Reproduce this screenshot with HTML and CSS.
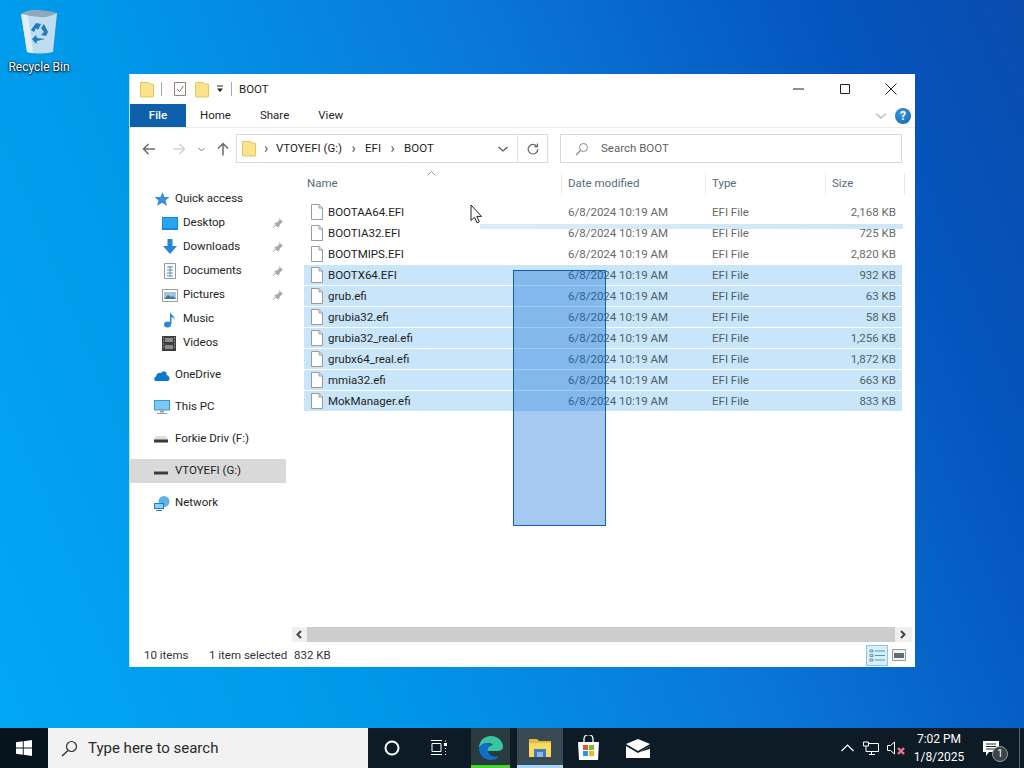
FILE: index.html
```html
<!DOCTYPE html>
<html lang="en">
<head>
    <meta charset="UTF-8">
    <title>BOOT</title>
    <link rel="stylesheet" href="styles.css">
</head>
<body>
    <svg class="defs" width="0" height="0">
        <symbol id="folder" viewBox="0 0 14 17">
            <path d="M1 1.500h7.500l1 1.500h3.500a.5.5 0 0 1 .5.5v12a.5.5 0 0 1-.5.5H1a.5.5 0 0 1-.5-.5V2a.5.5 0 0 1 .5-.5z" fill="#fbe38d" stroke="#e6c65c"/>
        </symbol>
        <symbol id="file" viewBox="0 0 14 16">
            <path d="M1.500.5h7.500l3.500 3.500v11.500h-11z" fill="#fff" stroke="#9a9a9a"/>
            <path d="M9 .5v3.500h3.500" fill="none" stroke="#9a9a9a"/>
        </symbol>
        <symbol id="pin" viewBox="0 0 12 12">
            <path d="M7 1l4 4-1.200.6-2.300 2.400-.3 2-1.200.4L2.500 6.900l.5-1.200 2-.3 2.400-2.300z" fill="#a9a9a9"/>
            <path d="M4 8L1 11" stroke="#a9a9a9"/>
        </symbol>
        <symbol id="drive" viewBox="0 0 14 8">
            <path d="M2 1h10l2 3v3.500H0V4z" fill="#dedede"/>
            <path d="M0 4.500h14v3H0z" fill="#3c3c3c"/>
        </symbol>
    </svg>

    <div class="desktop">
        <div class="desk-icon">
            <svg width="42" height="46" viewBox="0 0 42 46">
                <path d="M3 5l36-1-4 39q-14 3-26 0z" fill="#cfe3ee" opacity=".92"/>
                <path d="M3 5q8-5 18-4t18 3q-8 5-18 4T3 5z" fill="#8fa9b8"/>
                <path d="M3 5l6 38q3 1 6 1L10 6z" fill="#eef6fa" opacity=".7"/>
                <path d="M13 21l5-7 5 1-3 6-2-2-2 4zM26 15l4 8-2 4-5-1 3-3-3-4zM27 30l-8 2-1 3-4-5 4-4 1 3z" fill="#1d7cc4"/>
            </svg>
            <span>Recycle Bin</span>
        </div>

        <div class="window">
            <div class="titlebar">
                <svg class="ic" width="14" height="17"><use href="#folder"/></svg>
                <i class="qsep"></i>
                <svg class="ic check" width="14" height="16" viewBox="0 0 14 16">
                    <path d="M1.500 1.500h11v13h-11z" fill="#fff" stroke="#9c8276"/>
                    <path d="M4 8l2.500 2.500L10.500 5" fill="none" stroke="#777"/>
                </svg>
                <svg class="ic folder2" width="14" height="17"><use href="#folder"/></svg>
                <svg class="ic qdrop" width="8" height="8" viewBox="0 0 8 8">
                    <path d="M1 1h6" stroke="#222"/><path d="M1 3.500h6L4 7z" fill="#222"/>
                </svg>
                <i class="qsep"></i>
                <span class="title">BOOT</span>
                <div class="winbtns">
                    <svg width="12" height="12" viewBox="0 0 12 12"><path d="M0 6h11" stroke="#222"/></svg>
                    <svg width="12" height="12" viewBox="0 0 12 12"><path d="M1.500 1.500h9v9h-9z" fill="none" stroke="#222"/></svg>
                    <svg width="12" height="12" viewBox="0 0 12 12"><path d="M.5.500l11 11M11.500.500l-11 11" stroke="#222"/></svg>
                </div>
            </div>

            <div class="ribbon">
                <div class="tab file-tab">File</div>
                <div class="tab home-tab">Home</div>
                <div class="tab share-tab">Share</div>
                <div class="tab view-tab">View</div>
                <svg class="rib-chev" width="12" height="8" viewBox="0 0 12 8"><path d="M1 1.500l5 4.500 5-4.500" fill="none" stroke="#bdbdbd" stroke-width="1.500"/></svg>
                <div class="help">?</div>
            </div>

            <div class="addrrow">
                <svg class="nav-btn back" width="14" height="12" viewBox="0 0 14 12"><path d="M13 6H2M6.500 1L1.500 6l5 5" fill="none" stroke="#6b6b6b" stroke-width="1.500"/></svg>
                <svg class="nav-btn fwd" width="14" height="12" viewBox="0 0 14 12"><path d="M1 6h11M7.500 1l5 5-5 5" fill="none" stroke="#d4d4d4" stroke-width="1.500"/></svg>
                <svg class="nav-btn recent" width="7" height="5" viewBox="0 0 7 5"><path d="M.5 1l3 3 3-3" fill="none" stroke="#777"/></svg>
                <svg class="nav-btn up" width="12" height="14" viewBox="0 0 12 14"><path d="M6 13.500V2M1 6.500l5-5 5 5" fill="none" stroke="#6b6b6b" stroke-width="1.500"/></svg>
                <div class="addr">
                    <svg class="ic" width="14" height="17"><use href="#folder"/></svg>
                    <span class="crumb-sep first">›</span>
                    <span>VTOYEFI (G:)</span>
                    <span class="crumb-sep">›</span>
                    <span>EFI</span>
                    <span class="crumb-sep">›</span>
                    <span>BOOT</span>
                    <svg class="addr-drop" width="10" height="6" viewBox="0 0 10 6"><path d="M.5 1l4.500 4 4.500-4" fill="none" stroke="#555" stroke-width="1.200"/></svg>
                    <div class="refresh">
                        <svg width="12" height="12" viewBox="0 0 12 12"><path d="M10 3.500A4.800 4.800 0 1 0 10.800 6M10.500.500v3.200H7.300" fill="none" stroke="#666" stroke-width="1.200"/></svg>
                    </div>
                </div>
                <div class="search">
                    <svg width="14" height="14" viewBox="0 0 14 14"><circle cx="8.500" cy="5.500" r="4" fill="none" stroke="#8a8a8a"/><path d="M5.500 8.500L1 13" stroke="#8a8a8a" stroke-width="1.200"/></svg>
                    <span>Search BOOT</span>
                </div>
            </div>

            <div class="main">
                <nav class="sidebar">
                    <div class="group">
                        <div class="nav-item top">
                            <svg width="16" height="16" viewBox="0 0 16 16"><path d="M8.500 1l2 5h5l-4 3.500 1.500 5.500-5-3.200L3 15l1.500-5.500L.5 6h6z" fill="#3a8fd6"/></svg>
                            <span>Quick access</span>
                        </div>
                        <div class="nav-item sub">
                            <svg width="16" height="13" viewBox="0 0 16 13"><path d="M0 0h16v13H0z" fill="#0f8ce0"/><path d="M1 1h14v10H1z" fill="#29a4f0"/></svg>
                            <span>Desktop</span>
                            <svg class="pin" width="12" height="12"><use href="#pin"/></svg>
                        </div>
                        <div class="nav-item sub">
                            <svg width="16" height="16" viewBox="0 0 16 16"><path d="M5.500 0h5v7H15l-7 8-7-8h4.500z" fill="#2b86d1"/></svg>
                            <span>Downloads</span>
                            <svg class="pin" width="12" height="12"><use href="#pin"/></svg>
                        </div>
                        <div class="nav-item sub">
                            <svg width="16" height="16" viewBox="0 0 16 16"><path d="M2.500.5h11v15h-11z" fill="#fff" stroke="#9a9a9a"/><path d="M5 4h6M5 7h6M5 10h6M5 13h6M8 3v11" stroke="#5d8fb8"/></svg>
                            <span>Documents</span>
                            <svg class="pin" width="12" height="12"><use href="#pin"/></svg>
                        </div>
                        <div class="nav-item sub">
                            <svg width="16" height="13" viewBox="0 0 16 13"><path d="M.5.500h15v12H.5z" fill="#fff" stroke="#9a9a9a"/><path d="M2 3h12v7H2z" fill="#9ec6de"/><path d="M2 10l4-4 3 2 2-1 3 3z" fill="#4b7590"/></svg>
                            <span>Pictures</span>
                            <svg class="pin" width="12" height="12"><use href="#pin"/></svg>
                        </div>
                        <div class="nav-item sub">
                            <svg width="16" height="17" viewBox="0 0 16 17"><ellipse cx="5.500" cy="13.500" rx="3.500" ry="3" fill="#2b86d1"/><path d="M8 13V1c1 3 5 3.500 4.500 8-.5-2-2-3-3-3v7z" fill="#2b86d1"/></svg>
                            <span>Music</span>
                        </div>
                        <div class="nav-item sub">
                            <svg width="14" height="15" viewBox="0 0 14 15"><path d="M0 0h14v15H0z" fill="#3d3d3d"/><path d="M3 2h8v4H3zM3 9h8v4H3z" fill="#8c8c8c"/><path d="M1 2h1M1 5h1M1 8h1M1 11h1M12 2h1M12 5h1M12 8h1M12 11h1" stroke="#ccc"/></svg>
                            <span>Videos</span>
                        </div>
                    </div>
                    <div class="group">
                        <div class="nav-item top">
                            <svg width="16" height="11" viewBox="0 0 16 11"><path d="M1 11Q-1 8 2 6.500 3 2 7 3 9 0 12 2q1 2 .5 3 3 1 3 3.500t-2 2.500z" fill="#0f78c8"/></svg>
                            <span>OneDrive</span>
                        </div>
                    </div>
                    <div class="group">
                        <div class="nav-item top">
                            <svg width="16" height="14" viewBox="0 0 16 14"><path d="M0 0h16v10.500H0z" fill="#2f9bd8"/><path d="M1 1h14v8.500H1z" fill="#7cc8ef"/><path d="M6 10.500h4v2H6zM3 13h10v1H3z" fill="#9a9a9a"/></svg>
                            <span>This PC</span>
                        </div>
                    </div>
                    <div class="group">
                        <div class="nav-item top">
                            <svg class="drive" width="14" height="8"><use href="#drive"/></svg>
                            <span>Forkie Driv (F:)</span>
                        </div>
                    </div>
                    <div class="group">
                        <div class="nav-item top active">
                            <svg class="drive" width="14" height="8"><use href="#drive"/></svg>
                            <span>VTOYEFI (G:)</span>
                        </div>
                    </div>
                    <div class="group">
                        <div class="nav-item top">
                            <svg width="16" height="15" viewBox="0 0 16 15"><circle cx="10" cy="5.500" r="5.500" fill="#5fb2e6"/><path d="M0 7h10v6H0z" fill="#1f80c8"/><path d="M1 8h8v4H1z" fill="#8fd0f2"/><path d="M2 14h6v1H2z" fill="#1f80c8"/></svg>
                            <span>Network</span>
                        </div>
                    </div>
                </nav>

                <div class="pane">
                    <div class="col-head">
                        <div class="hcell name-h">Name
                            <svg class="sort" width="9" height="5" viewBox="0 0 9 5"><path d="M.5 4.500l4-4 4 4" fill="none" stroke="#9a9a9a"/></svg>
                        </div>
                        <div class="hcell">Date modified</div>
                        <div class="hcell">Type</div>
                        <div class="hcell">Size</div>
                    </div>
                    <div class="rows">
                        <div class="row"><div class="c-name"><svg width="14" height="16"><use href="#file"/></svg>BOOTAA64.EFI</div><div>6/8/2024 10:19 AM</div><div>EFI File</div><div class="c-size">2,168 KB</div></div>
                        <div class="row"><div class="c-name"><svg width="14" height="16"><use href="#file"/></svg>BOOTIA32.EFI</div><div>6/8/2024 10:19 AM</div><div>EFI File</div><div class="c-size">725 KB</div></div>
                        <div class="row"><div class="c-name"><svg width="14" height="16"><use href="#file"/></svg>BOOTMIPS.EFI</div><div>6/8/2024 10:19 AM</div><div>EFI File</div><div class="c-size">2,820 KB</div></div>
                        <div class="row sel"><div class="c-name"><svg width="14" height="16"><use href="#file"/></svg>BOOTX64.EFI</div><div>6/8/2024 10:19 AM</div><div>EFI File</div><div class="c-size">932 KB</div></div>
                        <div class="row sel"><div class="c-name"><svg width="14" height="16"><use href="#file"/></svg>grub.efi</div><div>6/8/2024 10:19 AM</div><div>EFI File</div><div class="c-size">63 KB</div></div>
                        <div class="row sel"><div class="c-name"><svg width="14" height="16"><use href="#file"/></svg>grubia32.efi</div><div>6/8/2024 10:19 AM</div><div>EFI File</div><div class="c-size">58 KB</div></div>
                        <div class="row sel"><div class="c-name"><svg width="14" height="16"><use href="#file"/></svg>grubia32_real.efi</div><div>6/8/2024 10:19 AM</div><div>EFI File</div><div class="c-size">1,256 KB</div></div>
                        <div class="row sel"><div class="c-name"><svg width="14" height="16"><use href="#file"/></svg>grubx64_real.efi</div><div>6/8/2024 10:19 AM</div><div>EFI File</div><div class="c-size">1,872 KB</div></div>
                        <div class="row sel"><div class="c-name"><svg width="14" height="16"><use href="#file"/></svg>mmia32.efi</div><div>6/8/2024 10:19 AM</div><div>EFI File</div><div class="c-size">663 KB</div></div>
                        <div class="row sel"><div class="c-name"><svg width="14" height="16"><use href="#file"/></svg>MokManager.efi</div><div>6/8/2024 10:19 AM</div><div>EFI File</div><div class="c-size">833 KB</div></div>
                    </div>
                    <div class="hscroll">
                        <svg class="sb-left" width="8" height="9" viewBox="0 0 8 9"><path d="M6 1L2.500 4.500 6 8" fill="none" stroke="#444" stroke-width="2"/></svg>
                        <div class="thumb"></div>
                        <svg class="sb-right" width="8" height="9" viewBox="0 0 8 9"><path d="M2 1l3.500 3.500L2 8" fill="none" stroke="#444" stroke-width="2"/></svg>
                    </div>
                </div>
            </div>

            <div class="status">
                <span class="s-count">10 items</span>
                <span class="s-sel">1 item selected</span>
                <span>832 KB</span>
                <div class="views">
                    <div class="view-btn on">
                        <svg width="17" height="15" viewBox="0 0 17 15"><path d="M1 2h3v2H1zM1 6.500h3v2H1zM1 11h3v2H1z" fill="none" stroke="#6b8fa3"/><path d="M6 3h10M6 7.500h10M6 12h10" stroke="#3aa0b8"/></svg>
                    </div>
                    <div class="view-btn">
                        <svg width="14" height="12" viewBox="0 0 14 12"><path d="M.5.500h13v11H.5z" fill="#f2f2f2" stroke="#9a9a9a"/><path d="M2 4h10v5H2z" fill="#5d6d78"/></svg>
                    </div>
                </div>
            </div>

            <div class="streak"></div>
            <div class="marquee"></div>
            <svg class="cursor" width="13" height="20" viewBox="0 0 13 20">
                <path d="M1 1v15.500l3.500-3.300 2.500 5.600 2.300-1-2.500-5.400h4.700z" fill="#fff" stroke="#222"/>
            </svg>
        </div>
    </div>

    <div class="taskbar">
        <div class="start">
            <svg width="16" height="16" viewBox="0 0 16 16"><path d="M0 2.300l6.800-1v6.200H0zM7.700 1.200L16 0v7.500H7.700zM0 8.500h6.800v6.200l-6.800-1zM7.700 8.500H16V16l-8.300-1.200z" fill="#fff"/></svg>
        </div>
        <div class="tb-search">
            <svg width="17" height="17" viewBox="0 0 17 17"><circle cx="10.500" cy="6.500" r="5" fill="none" stroke="#333" stroke-width="1.200"/><path d="M7 10.500L1 16" stroke="#333" stroke-width="1.400"/></svg>
            <span>Type here to search</span>
        </div>
        <div class="tb-slot cortana">
            <svg width="16" height="16" viewBox="0 0 16 16"><circle cx="8" cy="8" r="6.500" fill="none" stroke="#fff" stroke-width="2"/></svg>
        </div>
        <div class="tb-slot taskview">
            <svg width="17" height="16" viewBox="0 0 17 16"><path d="M1 3.500h9v8H1zM0 .5h11M0 14.500h11" fill="none" stroke="#fff"/><path d="M13 3h3v3h-3z" fill="#fff"/><path d="M14.500 .5v1M14.500 8v1M14.500 11v1M14.500 14v1" stroke="#fff"/></svg>
        </div>
        <div class="tb-app edge">
            <svg width="26" height="26" viewBox="0 0 26 26">
                <path d="M1 13C1 5 7 1 13 1c7 0 12 5 12 11 0 3-3 4-6 4H9c0-4 4-6 6-6-2-3-10-3-14 3z" fill="#39c5a0"/>
                <path d="M1 13c3-6 10-6 12-3-3 1-4 4-3 7s6 6 11 4c-2 3-5 4-8 4C6 25 1 20 1 13z" fill="#0e6fc8"/>
            </svg>
        </div>
        <div class="tb-app explorer">
            <svg width="24" height="20" viewBox="0 0 24 20">
                <path d="M1 1h8l2 2h12v16H1z" fill="#e8b93f"/>
                <path d="M1 5h22v14H1z" fill="#fbd95c"/>
                <path d="M6 11h12v8H6z" fill="#3f7cc4"/>
                <path d="M9 14h6v5H9z" fill="#8fb8e6"/>
            </svg>
        </div>
        <div class="tb-slot store">
            <svg width="23" height="26" viewBox="0 0 23 26">
                <path d="M7 8V4a4.500 4.500 0 0 1 9 0v4" fill="none" stroke="#fff" stroke-width="1.300"/>
                <path d="M1 7h21l-1 18H2z" fill="#fff"/>
                <path d="M6 10h5v5H6z" fill="#e8552f"/><path d="M12 10h5v5h-5z" fill="#7fba2a"/>
                <path d="M6 16h5v5H6z" fill="#1f9ce8"/><path d="M12 16h5v5h-5z" fill="#f2b81e"/>
            </svg>
        </div>
        <div class="tb-slot mail">
            <svg width="24" height="19" viewBox="0 0 24 19">
                <path d="M0 5L12 0l12 5-12 7z" fill="#fff"/>
                <path d="M0 7l12 7 12-7v12H0z" fill="#fff"/>
                <path d="M14 13l10-6v3z" fill="#1d2a33"/>
            </svg>
        </div>
        <div class="tray">
            <svg class="tray-caret" width="13" height="8" viewBox="0 0 13 8"><path d="M.5 7l6-6 6 6" fill="none" stroke="#fff" stroke-width="1.200"/></svg>
            <svg class="tray-net" width="16" height="14" viewBox="0 0 16 14"><path d="M.5 1h5v4h-5zM5.500 2.500h10v8H3V5M8.500 10.500v3M6 13.500h6" fill="none" stroke="#fff"/></svg>
            <svg class="tray-vol" width="20" height="14" viewBox="0 0 20 14">
                <path d="M.5 4.500h3L7.500 1v12l-4-3.500h-3z" fill="none" stroke="#fff"/>
                <path d="M11 7l6 6M17 7l-6 6" stroke="#f0758a" stroke-width="2.400"/>
            </svg>
            <div class="clock"><span>7:02 PM</span><span>1/8/2025</span></div>
            <div class="notif">
                <svg width="16" height="15" viewBox="0 0 16 15"><path d="M0 0h16v11H6l-3 4v-4H0z" fill="#fff"/><path d="M3 3h10M3 5.500h10M3 8h10" stroke="#1d2a33"/></svg>
                <span class="notif-badge">1</span>
            </div>
            <i class="show-desk"></i>
        </div>
    </div>
</body>
</html>
```

FILE: styles.css
```css
* {
    box-sizing: border-box;
}
html, body {
    margin: 0;
    height: 768px;
    overflow: hidden;
}
body {
    width: 1024px;
    display: flex;
    flex-direction: column;
    font-family: Roboto, "Noto Sans", sans-serif;
    font-size: 12px;
    color: #1e1e1e;
    background: linear-gradient(68deg, #02a8f4 0%, #0098e8 30%, #0a78d8 58%, #0455bd 85%, #0a4cae 100%);
}
.defs {
    position: absolute;
}
svg {
    display: block;
    flex: none;
}

/* desktop */
.desktop {
    flex: 1;
    position: relative;
}
.desk-icon {
    position: absolute;
    left: 0;
    top: 9px;
    width: 78px;
    display: flex;
    flex-direction: column;
    align-items: center;
    gap: 5px;
    color: #fff;
    text-shadow: 0 1px 2px #000, 0 0 2px #000;
}
.window {
    position: absolute;
    left: 129px;
    top: 74px;
    width: 786px;
    height: 593px;
    display: flex;
    flex-direction: column;
    background: #fff;
    border-left: 1px solid #bfe6f8;
    font-size: 11.500px;
}

/* title bar */
.titlebar {
    height: 30px;
    display: flex;
    align-items: center;
    padding-left: 10px;
}
.qsep {
    width: 1px;
    height: 14px;
    background: #a8a8a8;
    margin: 0 7px;
}
.check {
    margin-left: 4px;
}
.folder2 {
    margin-left: 8px;
}
.qdrop {
    margin-left: 7px;
}
.winbtns {
    margin-left: auto;
    display: flex;
    gap: 34px;
    padding-right: 18px;
}

/* ribbon */
.ribbon {
    height: 24px;
    display: flex;
    align-items: center;
    border-bottom: 1px solid #ececec;
    position: relative;
}
.tab {
    height: 23px;
    line-height: 23px;
}
.file-tab {
    width: 56px;
    background: #0f60ac;
    color: #fff;
    text-align: center;
    font-weight: 500;
}
.home-tab {
    margin-left: 14px;
}
.share-tab {
    margin-left: 29px;
}
.view-tab {
    margin-left: 29px;
}
.rib-chev {
    margin-left: auto;
}
.help {
    width: 16px;
    height: 16px;
    margin: 0 4px 0 8px;
    border-radius: 50%;
    background: radial-gradient(circle at 40% 35%, #3b9be0, #0f5fa8);
    color: #fff;
    font-weight: 700;
    font-size: 12px;
    line-height: 16px;
    text-align: center;
}

/* address row */
.addrrow {
    height: 45px;
    display: flex;
    align-items: flex-start;
    padding: 6px 13px 0 0;
}
.nav-btn {
    margin-top: 9px;
}
.back {
    margin-left: 12px;
}
.fwd {
    margin-left: 16px;
}
.recent {
    margin-left: 12px;
    margin-top: 13px;
}
.up {
    margin-left: 12px;
    margin-top: 8px;
}
.addr {
    width: 312px;
    height: 29px;
    margin-left: 7px;
    display: flex;
    align-items: center;
    padding-left: 5px;
    border: 1px solid #d9d9d9;
}
.addr span, .search span {
    margin-top: -1px;
}
.crumb-sep {
    width: 23px;
    text-align: center;
    font-size: 14px;
    line-height: 14px;
    color: #555;
}
.crumb-sep.first {
    width: 20px;
}
.addr-drop {
    margin-left: auto;
    margin-right: 9px;
}
.refresh {
    width: 30px;
    height: 100%;
    border-left: 1px solid #e2e2e2;
    display: flex;
    align-items: center;
    justify-content: center;
}
.search {
    flex: 1;
    height: 29px;
    margin-left: 12px;
    display: flex;
    align-items: center;
    gap: 12px;
    padding-left: 14px;
    border: 1px solid #d9d9d9;
    color: #5f5f5f;
}

/* main area */
.main {
    flex: 1;
    display: flex;
    min-height: 0;
}
.sidebar {
    width: 162px;
    padding-top: 14px;
    margin-right: 12px;
    display: flex;
    flex-direction: column;
    gap: 8px;
}
.nav-item {
    height: 24px;
    width: 156px;
    display: flex;
    align-items: center;
    gap: 5px;
    position: relative;
}
.nav-item.top {
    padding-left: 25px;
}
.nav-item.top > svg:first-child {
    margin-left: -1px;
}
.nav-item.sub {
    padding-left: 32px;
}
.nav-item.top > span {
    position: absolute;
    left: 45px;
    top: 4px;
}
.nav-item.sub > span {
    position: absolute;
    left: 53px;
    top: 4px;
}
.nav-item .pin {
    position: absolute;
    left: 142px;
    top: 6px;
}
.nav-item.active {
    background: #d9d9d9;
}
.drive {
    margin-left: 1px;
}
.pane {
    flex: 1;
    display: flex;
    flex-direction: column;
    min-width: 0;
    position: relative;
}
.col-head {
    display: grid;
    grid-template-columns: 258px 144px 120px 79px;
    height: 22px;
    color: #5a6b7a;
}
.hcell {
    padding-left: 6px;
    line-height: 20px;
    border-right: 1px solid #e8e8e8;
    position: relative;
}
.name-h {
    padding-left: 3px;
}
.sort {
    position: absolute;
    left: 123px;
    top: -2px;
}
.rows {
    flex: 1;
    padding-top: 7px;
    width: 598px;
}
.row {
    display: grid;
    grid-template-columns: 258px 144px 120px 76px;
    height: 20px;
    margin-bottom: 1px;
    align-items: center;
    color: #6a6a6a;
}
.row > div {
    padding-left: 6px;
}
.row .c-name {
    display: flex;
    align-items: center;
    gap: 4px;
    color: #1e1e1e;
}
.row .c-size {
    text-align: right;
    padding-right: 6px;
}
.row.sel {
    background: #c9e5f9;
    color: #4f5f6b;
}
.hscroll {
    height: 15px;
    margin-left: -12px;
    margin-right: 3px;
    margin-bottom: 1px;
    display: flex;
    align-items: center;
    background: #f0f0f0;
}
.sb-left {
    margin: 0 4px 0 3px;
}
.sb-right {
    margin: 0 5px 0 4px;
}
.thumb {
    flex: 1;
    height: 15px;
    background: #cdcdcd;
}

/* status bar */
.status {
    height: 24px;
    display: flex;
    align-items: center;
    padding-left: 14px;
    color: #333;
    white-space: nowrap;
}
.s-count {
    width: 65px;
}
.s-sel {
    width: 85px;
}
.views {
    margin-left: auto;
    display: flex;
    gap: 3px;
    padding-right: 8px;
    align-items: center;
}
.view-btn {
    width: 16px;
    display: flex;
    justify-content: center;
}
.view-btn.on {
    width: 22px;
    height: 21px;
    align-items: center;
    background: #d8eefa;
    border: 1px solid #8ec6e0;
}

/* overlays on the file list */
.streak {
    position: absolute;
    left: 350px;
    top: 150px;
    width: 423px;
    height: 5px;
    background: linear-gradient(90deg, #d9ecf8, #cfe6f6);
}
.marquee {
    position: absolute;
    left: 383px;
    top: 196px;
    width: 93px;
    height: 256px;
    background: rgba(0, 100, 215, 0.35);
    border: 1px solid #0a62b4;
}
.cursor {
    position: absolute;
    left: 340px;
    top: 130px;
}

/* taskbar */
.taskbar {
    height: 40px;
    position: relative;
    background: #0c1b26;
    color: #fff;
    display: flex;
    align-items: stretch;
}
.start {
    width: 48px;
    display: flex;
    align-items: center;
    justify-content: center;
    background: #06141e;
}
.tb-search {
    width: 320px;
    display: flex;
    align-items: center;
    gap: 10px;
    padding-left: 13px;
    background: #f2f2f2;
    color: #2a2a2a;
    font-size: 15px;
}
.tb-slot, .tb-app {
    display: flex;
    align-items: center;
    justify-content: center;
}
.cortana {
    width: 48px;
}
.taskview {
    width: 47px;
}
.tb-app {
    border-bottom: 3px solid;
    padding-top: 3px;
}
.edge {
    width: 39px;
    margin-left: 8px;
    background: #2a3b40;
    border-color: #44d62c;
}
.explorer {
    width: 46px;
    margin-left: 7px;
    background: #3a4a55;
    border-color: #a8d4f5;
}
.store {
    width: 50px;
}
.mail {
    width: 50px;
}
.tray {
    position: absolute;
    right: 0;
    top: 0;
    bottom: 0;
    display: flex;
    align-items: center;
}
.tray-net {
    margin-left: 9px;
}
.tray-vol {
    margin-left: 8px;
}
.clock {
    width: 62px;
    margin-left: 1px;
    display: flex;
    flex-direction: column;
    align-items: center;
    gap: 2px;
    line-height: 16px;
}
.notif {
    width: 42px;
    margin-right: 7px;
    position: relative;
    display: flex;
    justify-content: center;
}
.notif-badge {
    position: absolute;
    left: 22px;
    top: 5px;
    width: 16px;
    height: 16px;
    line-height: 14px;
    border-radius: 50%;
    border: 1px solid #9a9a9a;
    background: #38434b;
    font-size: 10px;
    text-align: center;
}
.show-desk {
    width: 1px;
    height: 100%;
    margin-right: 4px;
    background: #5a646b;
}
```
